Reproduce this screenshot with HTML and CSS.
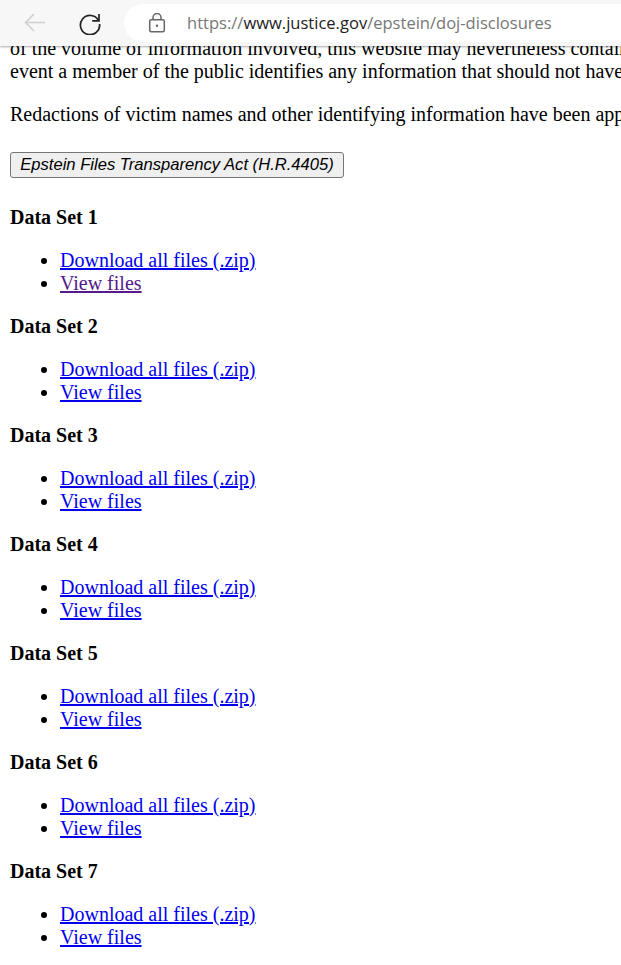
FILE: index.html
```html
<!DOCTYPE html>
<html>
<head>
    <title>DOJ Disclosures</title>
    <link rel="stylesheet" href="styles.css">
</head>
<body>
    <div class="toolbar">
        <svg class="back-icon" width="24" height="24" viewBox="0 0 24 24">
            <path d="M22 11.5H2.5M11 3L2.5 11.5L11 20"></path>
        </svg>
        <svg class="reload-icon" width="24" height="24" viewBox="0 0 24 24">
            <path d="M20.5 9.5A9.6 9.6 0 1 0 21.6 13"></path>
            <path d="M21 3V9.8H14.2"></path>
        </svg>
        <div class="address-bar">
            <svg class="lock-icon" width="18" height="20" viewBox="0 0 18 20">
                <rect x="1.7" y="6.7" width="14.6" height="12" rx="1.5"></rect>
                <path d="M5 6.5V4.5A4 4 0 0 1 13 4.5V6.5"></path>
                <circle cx="9" cy="12.7" r="1.2"></circle>
            </svg>
            <span class="url"><span class="url-muted">https://</span>www.justice.gov<span class="url-muted">/epstein/doj-disclosures</span></span>
        </div>
    </div>

    <div class="content">
        <p>of the volume of information involved, this website may nevertheless contain<br>event a member of the public identifies any information that should not have</p>
        <p>Redactions of victim names and other identifying information have been applied</p>
        <div class="act-row"><button class="act-button" type="button">Epstein Files Transparency Act (H.R.4405)</button></div>

        <p class="set-title">Data Set 1</p>
        <ul>
            <li><a href="#zip1">Download all files (.zip)</a></li>
            <li><a class="visited" href="#view1">View files</a></li>
        </ul>

        <p class="set-title">Data Set 2</p>
        <ul>
            <li><a href="#zip2">Download all files (.zip)</a></li>
            <li><a href="#view2">View files</a></li>
        </ul>

        <p class="set-title">Data Set 3</p>
        <ul>
            <li><a href="#zip3">Download all files (.zip)</a></li>
            <li><a href="#view3">View files</a></li>
        </ul>

        <p class="set-title">Data Set 4</p>
        <ul>
            <li><a href="#zip4">Download all files (.zip)</a></li>
            <li><a href="#view4">View files</a></li>
        </ul>

        <p class="set-title">Data Set 5</p>
        <ul>
            <li><a href="#zip5">Download all files (.zip)</a></li>
            <li><a href="#view5">View files</a></li>
        </ul>

        <p class="set-title">Data Set 6</p>
        <ul>
            <li><a href="#zip6">Download all files (.zip)</a></li>
            <li><a href="#view6">View files</a></li>
        </ul>

        <p class="set-title">Data Set 7</p>
        <ul>
            <li><a href="#zip7">Download all files (.zip)</a></li>
            <li><a href="#view7">View files</a></li>
        </ul>
    </div>
</body>
</html>
```

FILE: styles.css
```css
html,
body {
    height: 100%;
    overflow: hidden;
}

body {
    margin: 0;
    background-color: #fff;
    color: #000;
    font-family: "Liberation Serif", serif;
    font-size: 20px;
    line-height: 23px;
}

.toolbar {
    position: absolute;
    top: 0;
    left: 0;
    right: 0;
    height: 46px;
    display: flex;
    align-items: center;
    background-color: #f7f7f7;
    box-shadow: 0 1px 2px rgba(0, 0, 0, 0.35);
    z-index: 1;
}

.toolbar svg {
    flex: none;
    fill: none;
}

.back-icon {
    margin-left: 23px;
    stroke: #d0d0d0;
    stroke-width: 1.6;
}

.reload-icon {
    margin-left: 31px;
    stroke: #222;
    stroke-width: 1.7;
}

.address-bar {
    flex: 1;
    display: flex;
    align-items: center;
    height: 38px;
    margin-left: 22px;
    padding-left: 24px;
    background-color: #fff;
    border-radius: 19px 0 0 19px;
}

.lock-icon {
    stroke: #666;
    stroke-width: 1.5;
}

.lock-icon circle {
    fill: #666;
    stroke: none;
}

.url {
    margin-left: 21px;
    margin-bottom: 2px;
    font-family: "Open Sans", sans-serif;
    font-size: 16.55px;
    white-space: nowrap;
    color: #222;
}

.url-muted {
    color: #777;
}

.content {
    padding: 0 10px;
    margin-top: 37px;
    white-space: nowrap;
}

p {
    margin: 0 0 20px;
}

.set-title {
    font-weight: bold;
}

ul {
    margin: 0 0 20px;
    padding-left: 50px;
}

a {
    color: #00e;
}

a.visited {
    color: #551a8b;
}

.act-row {
    margin: 26px 0 28px;
}

.act-button {
    display: block;
    width: 334px;
    height: 26px;
    padding: 0;
    background-color: #efefef;
    border: 1px solid #767676;
    border-radius: 3px;
    color: #000;
    font-family: "Liberation Sans", sans-serif;
    font-size: 16.6px;
    font-style: italic;
}
```
